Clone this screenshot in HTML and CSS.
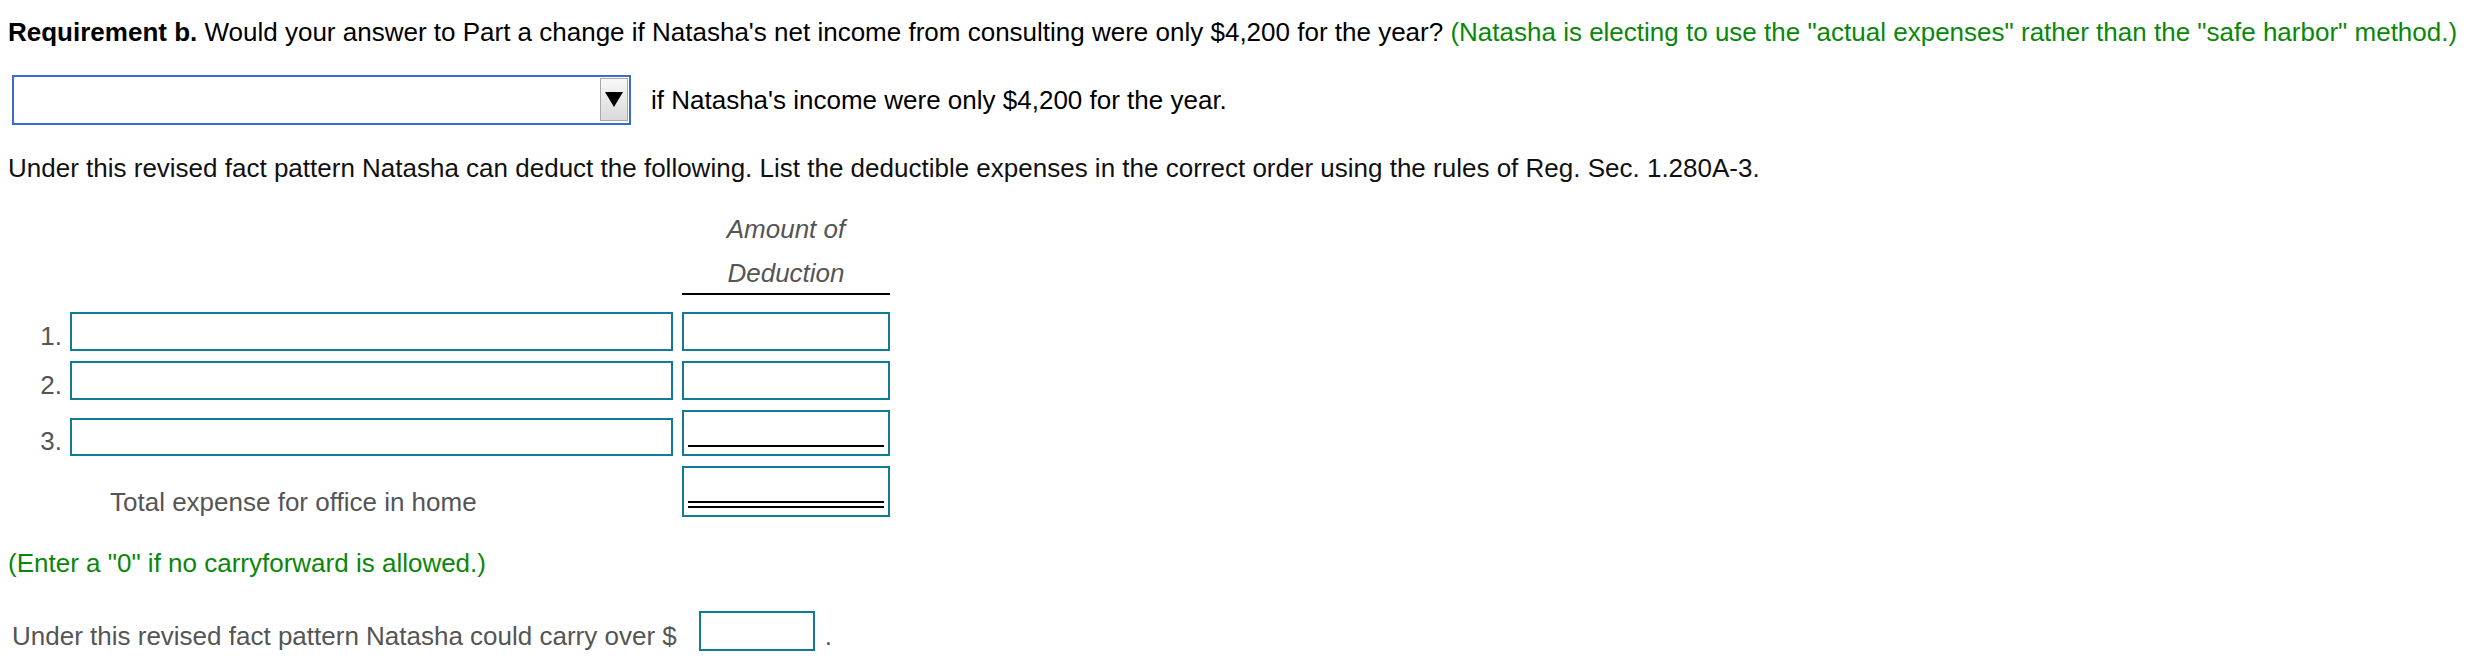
FILE: index.html
```html
<!DOCTYPE html>
<html>
<head>
<meta charset="utf-8">
<link rel="stylesheet" href="styles.css">
</head>
<body>
<div class="page">
  <p class="req"><b>Requirement b.</b> Would your answer to Part a change if Natasha's net income from consulting were only $4,200 for the year? <span class="hint">(Natasha is electing to use the "actual expenses" rather than the "safe harbor" method.)</span></p>

  <div class="choice-row">
    <div class="select">
      <span class="arrow"><svg width="18" height="15" viewBox="0 0 18 15"><polygon points="0,0 18,0 9,15" fill="#000"/></svg></span>
    </div>
    <span class="after">if Natasha's income were only $4,200 for the year.</span>
  </div>

  <p class="intro">Under this revised fact pattern Natasha can deduct the following. List the deductible expenses in the correct order using the rules of Reg. Sec. 1.280A-3.</p>

  <div class="sheet">
    <div class="row head-row">
      <span class="num"></span>
      <div class="desc-col"></div>
      <div class="head">Amount of<br>Deduction</div>
    </div>
    <div class="row r1">
      <span class="num">1.</span>
      <div class="inbox desc"></div>
      <div class="inbox amt"></div>
    </div>
    <div class="row r2">
      <span class="num">2.</span>
      <div class="inbox desc"></div>
      <div class="inbox amt"></div>
    </div>
    <div class="row r3">
      <span class="num">3.</span>
      <div class="inbox desc"></div>
      <div class="inbox amt tall"><div class="single"></div></div>
    </div>
    <div class="row r4">
      <span class="num"></span>
      <div class="desc-col total-label">Total expense for office in home</div>
      <div class="inbox amt total"><div class="double"></div></div>
    </div>
  </div>

  <p class="hint note">(Enter a "0" if no carryforward is allowed.)</p>

  <div class="carry">
    <span class="carry-text">Under this revised fact pattern Natasha could carry over $</span>
    <div class="inbox small"></div>
    <span class="dot">.</span>
  </div>
</div>
</body>
</html>
```

FILE: styles.css
```css
html, body {
  margin: 0;
  padding: 0;
  background: #fff;
}

body {
  font-family: "Liberation Sans", Arial, sans-serif;
  font-size: 26px;
  line-height: 30px;
  color: #000;
}

.page {
  padding: 17px 0 0 8px;
}

p {
  margin: 0;
}

.req {
  white-space: nowrap;
}

.hint {
  color: #0a870a;
}

.choice-row {
  display: flex;
  align-items: center;
  margin-top: 28px;
  height: 50px;
}

.select {
  box-sizing: border-box;
  width: 619px;
  height: 50px;
  margin-left: 4px;
  border: 2px solid #3a6bcf;
  padding: 1px;
  display: flex;
  justify-content: flex-end;
  align-items: flex-start;
}

.arrow {
  box-sizing: border-box;
  width: 28px;
  height: 43px;
  border: 1px solid #a8a8a8;
  background: linear-gradient(#f8f8f8, #dadada);
  display: flex;
  align-items: center;
  justify-content: center;
}

.after {
  margin-left: 20px;
}

.intro {
  margin-top: 28px;
  color: #111;
}

.sheet {
  margin-top: 24px;
}

.row {
  display: flex;
  align-items: flex-end;
}

.num {
  width: 54px;
  text-align: right;
  color: #555;
  flex: none;
}

.desc-col,
.desc {
  width: 603px;
  margin-left: 8px;
  flex: none;
  box-sizing: border-box;
}

.amt,
.head {
  width: 208px;
  margin-left: 9px;
  flex: none;
  box-sizing: border-box;
}

.head {
  height: 88px;
  line-height: 44px;
  text-align: center;
  font-style: italic;
  color: #555;
  border-bottom: 2px solid #000;
}

.inbox {
  border: 2px solid #117a98;
  background: #fff;
  box-sizing: border-box;
}

.r1 {
  margin-top: 17px;
}

.r1 .inbox,
.r2 .inbox {
  height: 39px;
}

.r2,
.r3,
.r4 {
  margin-top: 10px;
}

.r3 .desc {
  height: 38px;
}

.amt.tall {
  height: 46px;
  display: flex;
  flex-direction: column;
  justify-content: flex-end;
  padding: 0 4px 7px;
}

.single {
  height: 2px;
  background: #000;
}

.amt.total {
  height: 51px;
  display: flex;
  flex-direction: column;
  justify-content: flex-end;
  padding: 0 4px 7px;
}

.double {
  height: 3px;
  border-top: 2px solid #000;
  border-bottom: 2px solid #000;
}

.total-label {
  padding-left: 40px;
  color: #555;
}

.note {
  margin-top: 31px;
}

.carry {
  display: flex;
  align-items: flex-end;
  margin-top: 33px;
  color: #555;
  padding-left: 4px;
}

.inbox.small {
  width: 116px;
  height: 40px;
  margin-left: 22px;
}

.dot {
  margin-left: 10px;
}
```
